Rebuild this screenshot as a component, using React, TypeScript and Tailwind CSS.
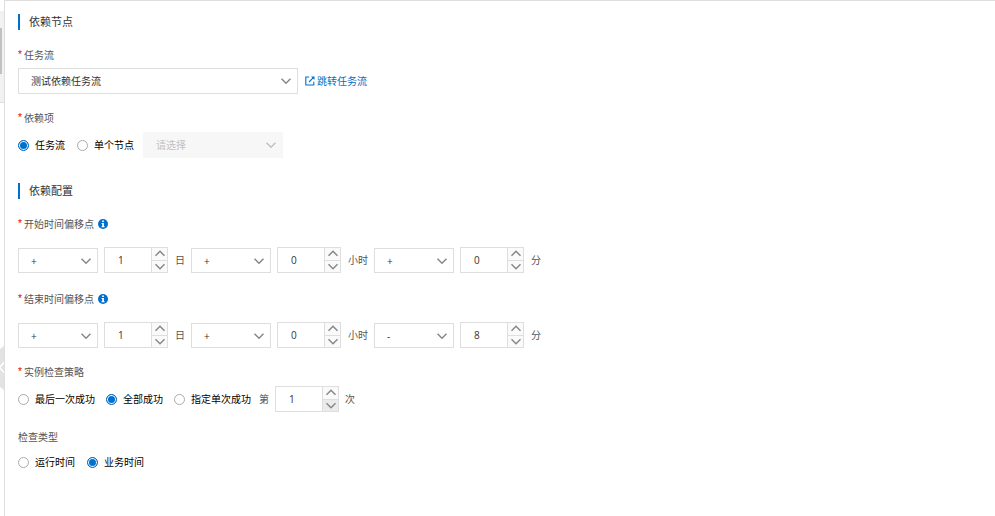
import { useState, type ReactNode } from "react";
import clsx from "clsx";

type Offset = { sign: string; value: number };

function Chevron({ className, up }: { className?: string; up?: boolean }) {
  return (
    <svg
      viewBox="0 0 12 7"
      className={clsx("h-[7px] w-3 fill-none stroke-current", className)}
      strokeWidth="1.5"
      aria-hidden="true"
    >
      <path d={up ? "M1.5 5.8 L6 1.3 L10.5 5.8" : "M1.5 1.2 L6 5.7 L10.5 1.2"} />
    </svg>
  );
}

function JumpIcon() {
  return (
    <svg viewBox="0 0 10 10" className="size-[10px] fill-none stroke-current" aria-hidden="true">
      <path d="M4.2 1 H0.8 V9 H8.8 V5.8" strokeWidth="1.1" />
      <path d="M4 6 L8.6 1.4" strokeWidth="1.1" />
      <path d="M6 0.4 H9.5 V3.9 Z" className="fill-current" stroke="none" />
    </svg>
  );
}

function InfoIcon() {
  return (
    <svg viewBox="0 0 10 10" className="size-[10px]" aria-hidden="true">
      <circle cx="5" cy="5" r="5" fill="#0070cc" />
      <path d="M4.1 1.6 H5.9 V3.1 H4.1 Z M3.6 4 H5.9 V7.3 H6.6 V8.3 H3.5 V7.3 H4.2 V5 H3.6 Z" fill="#fff" />
    </svg>
  );
}

function SectionTitle({ children }: { children: ReactNode }) {
  return (
    <h2 className="flex h-4 items-center border-l-2 border-[#0070cc] pl-[9px] text-[11px] text-[#333]">
      {children}
    </h2>
  );
}

function FieldLabel({
  children,
  id,
  htmlFor,
  required = true,
  info,
}: {
  children: ReactNode;
  id?: string;
  htmlFor?: string;
  required?: boolean;
  info?: boolean;
}) {
  return (
    <div className="flex h-4 items-center text-[#555]">
      {required && (
        <span className="w-[6px] font-['Liberation_Sans',sans-serif] text-[#e00000]">*</span>
      )}
      <label id={id} htmlFor={htmlFor}>
        {children}
      </label>
      {info && (
        <span className="ml-1">
          <InfoIcon />
        </span>
      )}
    </div>
  );
}

function Select({
  id,
  label,
  value,
  options,
  onChange,
  disabled,
  className,
}: {
  id?: string;
  label?: string;
  value: string;
  options: string[];
  onChange?: (v: string) => void;
  disabled?: boolean;
  className?: string;
}) {
  return (
    <div className={clsx("relative", className)}>
      <select
        id={id}
        aria-label={label}
        value={value}
        disabled={disabled}
        onChange={(e) => onChange?.(e.target.value)}
        className="size-full appearance-none border border-[#dedede] bg-white pl-3 text-[#333] opacity-100 disabled:border-[#f7f7f7] disabled:bg-[#f7f7f7] disabled:text-[#c1c1c1]"
      >
        {options.map((o) => (
          <option key={o}>{o}</option>
        ))}
      </select>
      <Chevron
        className={clsx(
          "pointer-events-none absolute top-1/2 right-[6px] -translate-y-1/2",
          disabled ? "text-[#c1c1c1]" : "text-[#888]"
        )}
      />
    </div>
  );
}

function NumberBox({
  label,
  value,
  onChange,
  min,
}: {
  label: string;
  value: number;
  onChange: (v: number) => void;
  min?: number;
}) {
  const atMin = min !== undefined && value <= min;

  return (
    <div className="flex h-[26px] w-16 border border-[#dedede] bg-white">
      <input
        type="number"
        aria-label={label}
        value={value}
        min={min}
        onChange={(e) => onChange(Number(e.target.value))}
        className="min-w-0 flex-1 pl-[13px] text-[#333] outline-none [appearance:textfield] [&::-webkit-inner-spin-button]:appearance-none"
      />
      <div className="flex w-4 flex-col border-l border-[#dedede] bg-[#fafafa] text-[#888]">
        <button
          type="button"
          aria-label={label + "加"}
          onClick={() => onChange(value + 1)}
          className="flex flex-1 items-center justify-center border-b border-[#dedede]"
        >
          <Chevron up />
        </button>
        <button
          type="button"
          aria-label={label + "减"}
          disabled={atMin}
          onClick={() => onChange(value - 1)}
          className="flex flex-1 items-center justify-center disabled:bg-[#ebebeb]"
        >
          <Chevron />
        </button>
      </div>
    </div>
  );
}

function RadioItem({
  name,
  label,
  checked,
  onChange,
}: {
  name: string;
  label: string;
  checked: boolean;
  onChange: () => void;
}) {
  return (
    <label className="flex items-center gap-[6px] text-black">
      <input
        type="radio"
        name={name}
        checked={checked}
        onChange={onChange}
        className="size-[11px] appearance-none rounded-full border border-[#aaa] bg-white checked:border-[#0070cc] checked:bg-[#0070cc] checked:shadow-[inset_0_0_0_1px_#fff]"
      />
      {label}
    </label>
  );
}

const UNITS = ["日", "小时", "分"];

function OffsetRow({ title, initial }: { title: string; initial: Offset[] }) {
  const [offsets, setOffsets] = useState(initial);

  function update(index: number, patch: Partial<Offset>) {
    setOffsets(offsets.map((o, i) => (i === index ? { ...o, ...patch } : o)));
  }

  return (
    <div role="group" aria-label={title} className="mt-[15px] flex flex-wrap items-end gap-[6px]">
      {offsets.map((o, i) => (
        <div key={UNITS[i]} className="flex items-end gap-[6px]">
          <Select
            label={title + UNITS[i] + "符号"}
            value={o.sign}
            options={["+", "-"]}
            onChange={(sign) => update(i, { sign })}
            className="h-[25px] w-20"
          />
          <div className="flex items-center gap-[7px]">
            <NumberBox
              label={title + UNITS[i]}
              value={o.value}
              onChange={(value) => update(i, { value })}
            />
            <span className="text-[#555]">{UNITS[i]}</span>
          </div>
        </div>
      ))}
    </div>
  );
}

export default function App() {
  const [flow, setFlow] = useState("测试依赖任务流");
  const [target, setTarget] = useState("任务流");
  const [strategy, setStrategy] = useState("全部成功");
  const [times, setTimes] = useState(1);
  const [checkType, setCheckType] = useState("业务时间");

  return (
    <div className="flex min-h-screen bg-white font-['Open_Sans','Noto_Sans_CJK_SC',sans-serif] text-[10px] leading-4">
      {/* edge of the canvas behind the drawer */}
      <aside className="w-1 shrink-0 overflow-hidden">
        <div className="mt-[11px] h-[92px] border-b border-[#dedede] bg-[#f1f1f1] pt-[17px]">
          <div className="h-[46px] w-[2px] bg-[#c1c1c1]" />
        </div>
        <button type="button" aria-label="收起" className="mt-[243px] block h-11 w-full">
          <svg viewBox="0 0 4 44" className="h-11 w-1">
            <path d="M0 3 L4 0 V44 L0 41 Z" fill="#e3e3e3" />
            <path d="M5 15.5 L-0.5 21.5 L5 27.5" fill="none" stroke="#fff" strokeWidth="1.5" />
          </svg>
        </button>
      </aside>

      <main className="flex-1 border-t border-l border-[#dedede] px-[13px] pt-[13px] pb-6">
        <SectionTitle>依赖节点</SectionTitle>

        <div className="mt-[17px]">
          <FieldLabel htmlFor="flow">任务流</FieldLabel>
          <div className="mt-[5px] flex items-center gap-[7px]">
            <Select
              id="flow"
              value={flow}
              options={["测试依赖任务流"]}
              onChange={setFlow}
              className="h-[26px] w-[280px]"
            />
            <a href="#flow" className="flex items-center gap-[2px] text-[#0070cc]">
              <JumpIcon />
              跳转任务流
            </a>
          </div>
        </div>

        <div className="mt-4">
          <FieldLabel id="target">依赖项</FieldLabel>
          <div className="mt-[6px] flex items-center gap-[9px]">
            <div role="radiogroup" aria-labelledby="target" className="flex items-center gap-3">
              {["任务流", "单个节点"].map((t) => (
                <RadioItem
                  key={t}
                  name="target"
                  label={t}
                  checked={target === t}
                  onChange={() => setTarget(t)}
                />
              ))}
            </div>
            <Select
              label="节点"
              value="请选择"
              options={["请选择"]}
              disabled={target === "任务流"}
              className="h-[26px] w-[140px]"
            />
          </div>
        </div>

        <div className="mt-[25px]">
          <SectionTitle>依赖配置</SectionTitle>
        </div>

        <div className="mt-[17px]">
          <FieldLabel info>开始时间偏移点</FieldLabel>
          <OffsetRow
            title="开始时间偏移点"
            initial={[
              { sign: "+", value: 1 },
              { sign: "+", value: 0 },
              { sign: "+", value: 0 },
            ]}
          />
        </div>

        <div className="mt-[18px]">
          <FieldLabel info>结束时间偏移点</FieldLabel>
          <OffsetRow
            title="结束时间偏移点"
            initial={[
              { sign: "+", value: 1 },
              { sign: "+", value: 0 },
              { sign: "-", value: 8 },
            ]}
          />
        </div>

        <div className="mt-4">
          <FieldLabel id="strategy">实例检查策略</FieldLabel>
          <div className="mt-[6px] flex items-center gap-[6px]">
            <div role="radiogroup" aria-labelledby="strategy" className="flex items-center gap-[11px]">
              {["最后一次成功", "全部成功", "指定单次成功"].map((s) => (
                <RadioItem
                  key={s}
                  name="strategy"
                  label={s}
                  checked={strategy === s}
                  onChange={() => setStrategy(s)}
                />
              ))}
            </div>
            <div className="ml-[2px] flex items-center gap-[6px] text-[#555]">
              第
              <NumberBox label="第几次" value={times} min={1} onChange={setTimes} />
              次
            </div>
          </div>
        </div>

        <div className="mt-[17px]">
          <FieldLabel id="check-type" required={false}>
            检查类型
          </FieldLabel>
          <div
            role="radiogroup"
            aria-labelledby="check-type"
            className="mt-[9px] flex items-center gap-3"
          >
            {["运行时间", "业务时间"].map((c) => (
              <RadioItem
                key={c}
                name="check-type"
                label={c}
                checked={checkType === c}
                onChange={() => setCheckType(c)}
              />
            ))}
          </div>
        </div>
      </main>
    </div>
  );
}
